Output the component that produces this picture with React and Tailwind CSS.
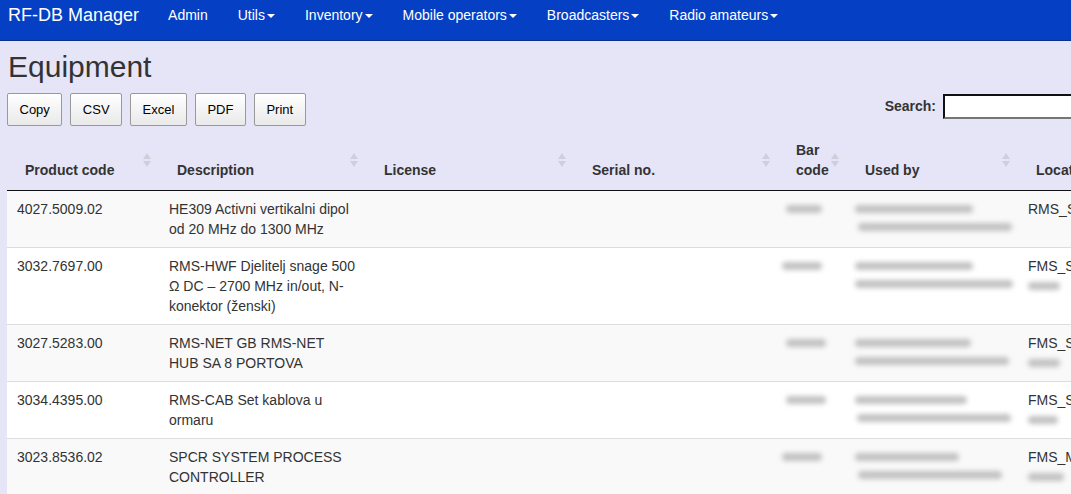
import React from 'react';

const navItems = [
  { label: 'Admin', caret: false },
  { label: 'Utils', caret: true },
  { label: 'Inventory', caret: true },
  { label: 'Mobile operators', caret: true },
  { label: 'Broadcasters', caret: true },
  { label: 'Radio amateurs', caret: true },
];

const columns = [
  { label: 'Product code', width: 152 },
  { label: 'Description', width: 207 },
  { label: 'License', width: 208 },
  { label: 'Serial no.', width: 204 },
  { label: 'Bar code', width: 69 },
  { label: 'Used by', width: 171 },
  { label: 'Location', width: 160 },
];

const rows = [
  {
    code: '4027.5009.02',
    desc: 'HE309 Activni vertikalni dipol od 20 MHz do 1300 MHz',
    bar: [36, 0],
    used: [[118, 0], [154, 3]],
    loc: 'RMS_Split',
    loc2: 0,
  },
  {
    code: '3032.7697.00',
    desc: 'RMS-HWF Djelitelj snage 500 Ω DC – 2700 MHz in/out, N-konektor (ženski)',
    bar: [40, -4],
    used: [[118, 0], [158, 0]],
    loc: 'FMS_Split',
    loc2: 32,
  },
  {
    code: '3027.5283.00',
    desc: 'RMS-NET GB RMS-NET HUB SA 8 PORTOVA',
    bar: [40, 0],
    used: [[116, 0], [154, 0]],
    loc: 'FMS_Split',
    loc2: 32,
  },
  {
    code: '3034.4395.00',
    desc: 'RMS-CAB Set kablova u ormaru',
    bar: [40, 0],
    used: [[112, 0], [154, 2]],
    loc: 'FMS_Split',
    loc2: 30,
  },
  {
    code: '3023.8536.02',
    desc: 'SPCR SYSTEM PROCESS CONTROLLER',
    bar: [40, -4],
    used: [[104, 0], [144, 3]],
    loc: 'FMS_Makarska',
    loc2: 36,
  },
];

function Caret() {
  return (
    <span className="ml-[2px] inline-block h-0 w-0 border-x-[4px] border-t-[4px] border-x-transparent border-t-white align-middle" />
  );
}

function SortIcon() {
  return (
    <svg className="absolute right-[8px] top-1/2 -translate-y-1/2" width="8" height="16" viewBox="0 0 8 16">
      <path d="M4 1 L8 7 L0 7 Z" fill="#cfcfdc" />
      <path d="M4 15 L8 9 L0 9 Z" fill="#cfcfdc" />
    </svg>
  );
}

function Blur({ w, ml = 0 }) {
  return (
    <span
      className="block h-[8px] rounded-full bg-[#c2c2c2] blur-[2.5px]"
      style={{ width: w, marginLeft: ml }}
    />
  );
}

export default function App() {
  return (
    <div
      className="min-h-screen w-[1071px] overflow-hidden bg-[#e5e5f7] text-[#333]"
      style={{ fontFamily: '"Liberation Sans", Arial, sans-serif' }}
    >
      <nav className="flex h-[41px] items-start border-b border-[#08308f] bg-[#0540c4] text-white">
        <div className="pl-[8px] pr-[15px] pt-[3px] text-[18px] leading-[24px]">RF-DB Manager</div>
        <ul className="flex pl-[14px] pt-[5px] text-[14px] leading-[20px]">
          {navItems.map((item) => (
            <li key={item.label} className="mr-[30px] whitespace-nowrap">
              {item.label}
              {item.caret && <Caret />}
            </li>
          ))}
        </ul>
      </nav>

      <div className="pl-[7px]">
        <h1 className="mt-[9px] pl-[1px] text-[30px] leading-[33px] text-[#333]">Equipment</h1>

        <div className="mt-[10px] flex items-start">
          <div className="flex gap-[8px]">
            {['Copy', 'CSV', 'Excel', 'PDF', 'Print'].map((b) => (
              <button
                key={b}
                className="h-[33px] rounded-[2px] border border-[#999] bg-gradient-to-b from-white to-[#e9e9e9] px-[11.5px] text-[13px] text-black"
              >
                {b}
              </button>
            ))}
          </div>
          <label className="ml-auto flex items-center gap-[7px] pt-[1px] text-[14px] font-bold text-[#333]">
            Search:
            <input className="mr-[-42px] h-[25px] w-[170px] border-2 border-[#111] border-b-[#767676] border-r-[#767676] bg-white" />
          </label>
        </div>

        <table className="mt-[4px] table-fixed border-collapse text-[14px] leading-[20px]" style={{ width: 1171 }}>
          <colgroup>
            {columns.map((c) => (
              <col key={c.label} style={{ width: c.width }} />
            ))}
          </colgroup>
          <thead>
            <tr className="border-b border-[#111]">
              {columns.map((c) => (
                <th
                  key={c.label}
                  className="relative px-[18px] pb-[10px] pt-[10px] text-left align-bottom font-bold"
                >
                  {c.label}
                  <SortIcon />
                </th>
              ))}
            </tr>
          </thead>
          <tbody>
            {rows.map((r, i) => (
              <tr
                key={r.code}
                className={`${i > 0 ? 'border-t border-[#ddd]' : ''} ${i % 2 === 0 ? 'bg-[#f9f9f9]' : 'bg-white'}`}
              >
                <td className="px-[10px] py-[8px] align-top">{r.code}</td>
                <td className="px-[10px] py-[8px] align-top">{r.desc}</td>
                <td className="px-[10px] py-[8px] align-top"></td>
                <td className="px-[10px] py-[8px] align-top"></td>
                <td className="px-[8px] pt-[14px] align-top">
                  <Blur w={r.bar[0]} ml={r.bar[1]} />
                </td>
                <td className="px-[8px] pt-[14px] align-top">
                  <div className="flex flex-col gap-[10px]">
                    <Blur w={r.used[0][0]} ml={r.used[0][1]} />
                    <Blur w={r.used[1][0]} ml={r.used[1][1]} />
                  </div>
                </td>
                <td className="whitespace-nowrap px-[10px] py-[8px] align-top">
                  <div>{r.loc}</div>
                  {r.loc2 > 0 && (
                    <div className="pt-[6px]">
                      <Blur w={r.loc2} />
                    </div>
                  )}
                </td>
              </tr>
            ))}
          </tbody>
        </table>
      </div>
    </div>
  );
}
